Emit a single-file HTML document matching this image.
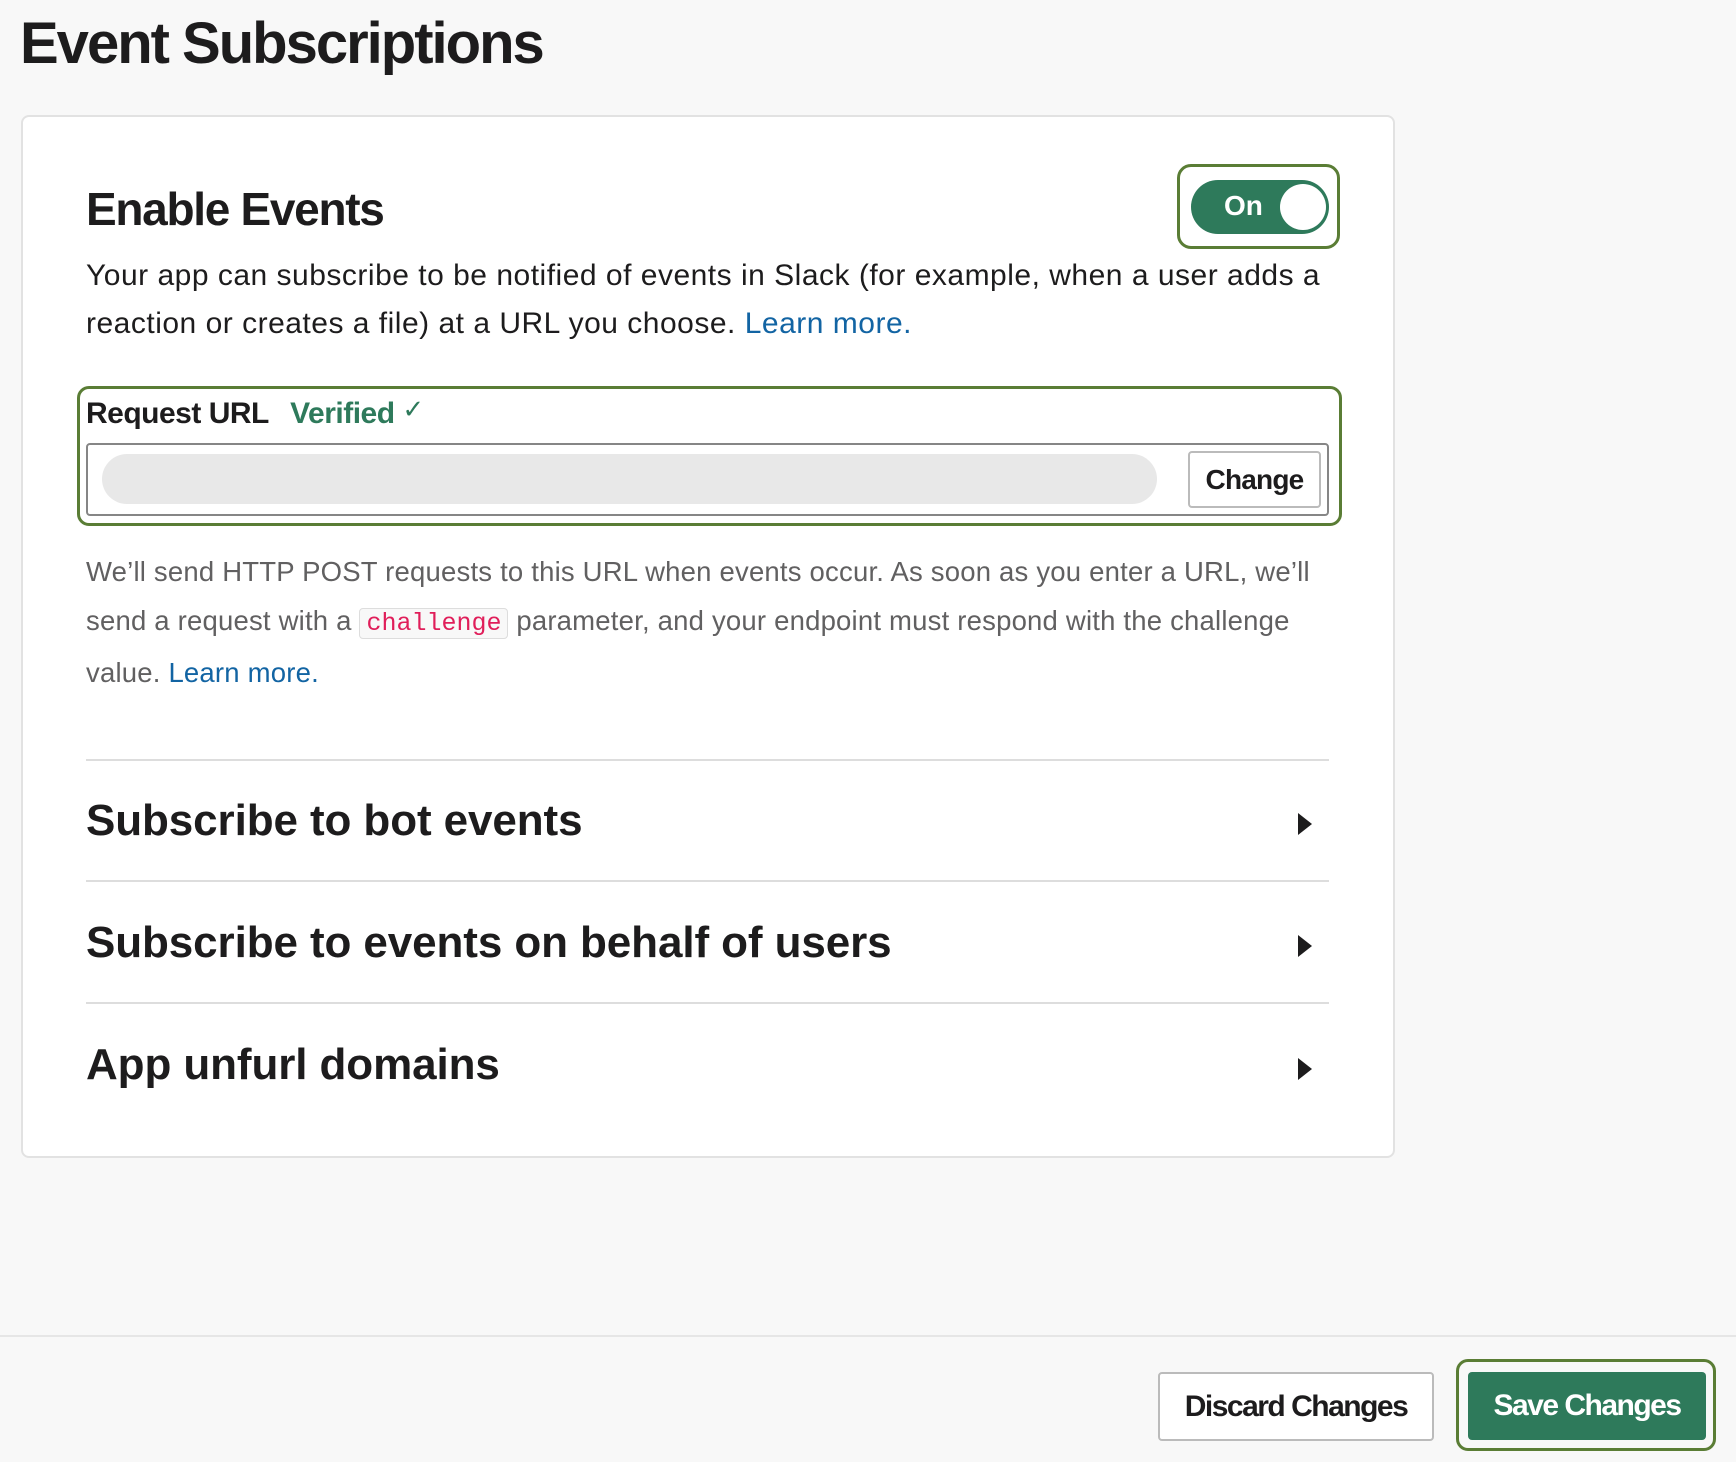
<!DOCTYPE html>
<html><head><meta charset="utf-8"><style>
*{box-sizing:border-box;margin:0;padding:0}
body{width:1736px;height:1462px;background:#f8f8f8;font-family:"Liberation Sans",sans-serif;color:#1d1c1d;position:relative;overflow:hidden}
.abs{position:absolute}
h1{position:absolute;left:20px;top:10px;font-size:58px;font-weight:bold;letter-spacing:-2px;white-space:nowrap}
.card{left:21px;top:115px;width:1374px;height:1043px;background:#fff;border:2px solid #e2e2e2;border-radius:8px}
.t{white-space:nowrap}
a{color:#1264a3;text-decoration:none}
.sec{font-size:44px;font-weight:bold;letter-spacing:-0.1px}
.div{left:86px;width:1243px;height:2px;background:#dddddd}
.arr{width:0;height:0;border-top:11px solid transparent;border-bottom:11px solid transparent;border-left:14px solid #1d1c1d}
</style></head><body>
<h1>Event Subscriptions</h1>
<div class="abs card"></div>
<div class="abs t" style="left:86px;top:182px;font-size:46px;font-weight:bold;letter-spacing:-1.3px">Enable Events</div>
<div class="abs" style="left:1177px;top:164px;width:163px;height:85px;border:3px solid #5a7d35;border-radius:14px"></div>
<div class="abs" style="left:1191px;top:180px;width:138px;height:54px;background:#2e7a5b;border-radius:27px"></div>
<div class="abs t" style="left:1224px;top:190px;color:#fff;font-weight:bold;font-size:28px">On</div>
<div class="abs" style="left:1280px;top:184px;width:46px;height:46px;background:#fff;border-radius:50%"></div>
<div class="abs t" style="left:86px;top:252px;font-size:30px;line-height:48px;letter-spacing:0.5px">Your app can subscribe to be notified of events in Slack (for example, when a user adds a<br>reaction or creates a file) at a URL you choose. <a>Learn more.</a></div>
<div class="abs" style="left:77px;top:386px;width:1265px;height:140px;border:3px solid #5a7d35;border-radius:12px"></div>
<div class="abs t" style="left:86px;top:394px;font-size:30px;font-weight:bold;letter-spacing:-0.5px">Request URL <span style="color:#2e7a5b;margin-left:14px">Verified</span> <span style="color:#2e7a5b;font-size:26px;font-weight:normal;vertical-align:5px">✓</span></div>
<div class="abs" style="left:86px;top:443px;width:1243px;height:73px;border:2px solid #868686;border-radius:4px;background:#fff"></div>
<div class="abs" style="left:102px;top:454px;width:1055px;height:50px;background:#e8e8e8;border-radius:25px"></div>
<div class="abs t" style="left:1188px;top:451px;width:133px;height:57px;border:2px solid #bbb;border-radius:4px;font-size:28px;font-weight:bold;text-align:center;line-height:53px;letter-spacing:-0.8px">Change</div>
<div class="abs t" style="left:86px;top:547px;font-size:27.5px;line-height:49px;color:#616061;letter-spacing:0.2px">We’ll send HTTP POST requests to this URL when events occur. As soon as you enter a URL, we’ll<br>send a request with a <span style="font-family:'Liberation Mono',monospace;color:#e01e5a;background:#f8f8f8;border:1px solid #ddd;border-radius:4px;padding:0 6px;font-size:25px;letter-spacing:0">challenge</span> parameter, and your endpoint must respond with the challenge<br>value. <a>Learn more.</a></div>
<div class="abs div" style="top:759px"></div>
<div class="abs div" style="top:880px"></div>
<div class="abs div" style="top:1002px"></div>
<div class="abs t sec" style="left:86px;top:796px">Subscribe to bot events</div>
<div class="abs t sec" style="left:86px;top:918px">Subscribe to events on behalf of users</div>
<div class="abs t sec" style="left:86px;top:1040px">App unfurl domains</div>
<div class="abs arr" style="left:1298px;top:813px"></div>
<div class="abs arr" style="left:1298px;top:935px"></div>
<div class="abs arr" style="left:1298px;top:1058px"></div>
<div class="abs" style="left:0;top:1335px;width:1736px;height:127px;background:#f8f8f8;border-top:2px solid #e6e6e6"></div>
<div class="abs t" style="left:1158px;top:1372px;width:276px;height:69px;background:#fff;border:2px solid #bbb;border-radius:4px;font-size:30px;font-weight:bold;text-align:center;line-height:65px;letter-spacing:-1.5px">Discard Changes</div>
<div class="abs" style="left:1456px;top:1359px;width:260px;height:92px;border:3px solid #5a7d35;border-radius:12px"></div>
<div class="abs t" style="left:1468px;top:1372px;width:238px;height:68px;background:#2e7a5b;border-radius:4px;color:#fff;font-size:30px;font-weight:bold;text-align:center;line-height:68px;letter-spacing:-1.5px">Save Changes</div>
</body></html>
